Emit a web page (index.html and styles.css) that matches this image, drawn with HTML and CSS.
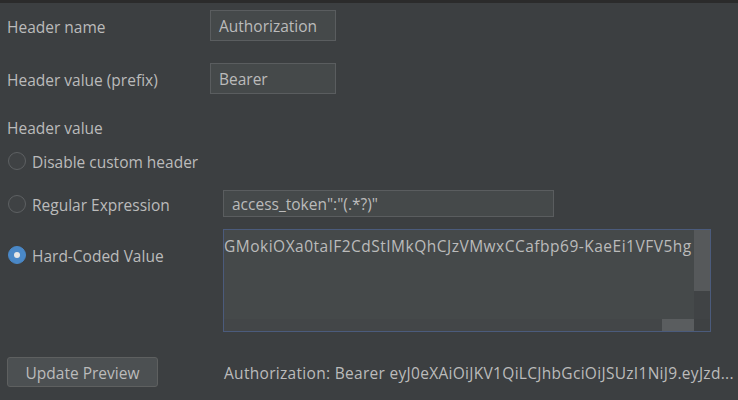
FILE: index.html
```html
<!DOCTYPE html>
<html>
<head>
<meta charset="utf-8">
<link rel="stylesheet" href="styles.css">
</head>
<body>
<div class="topbar"></div>
<div class="form">
  <div class="row row-name">
    <span class="label">Header name</span>
    <div class="field field-short">Authorization</div>
  </div>
  <div class="row row-prefix">
    <span class="label">Header value (prefix)</span>
    <div class="field field-short">Bearer</div>
  </div>
  <div class="section-label">Header value</div>
  <div class="radio-row row-disable">
    <span class="radio"></span>
    <span class="label">Disable custom header</span>
  </div>
  <div class="radio-row row-regex">
    <div class="radio-label">
      <span class="radio"></span>
      <span class="label">Regular Expression</span>
    </div>
    <div class="field field-long">access_token":"(.*?)"</div>
  </div>
  <div class="radio-row row-hard">
    <div class="radio-label hard-label">
      <span class="radio checked"></span>
      <span class="label">Hard-Coded Value</span>
    </div>
    <div class="textarea">
      <div class="ta-content">
        <div class="ta-text">GMokiOXa0talF2CdStIMkQhCJzVMwxCCafbp69-KaeEi1VFV5hg</div>
        <div class="hscroll"><div class="hthumb"></div></div>
      </div>
      <div class="vscroll"><div class="vthumb"></div><div class="corner"></div></div>
    </div>
  </div>
  <div class="bottom-row">
    <button class="btn">Update Preview</button>
    <span class="preview">Authorization: Bearer eyJ0eXAiOiJKV1QiLCJhbGciOiJSUzI1NiJ9.eyJzd...</span>
  </div>
</div>
</body>
</html>
```
FILE: styles.css
```css
html, body {
  margin: 0;
  padding: 0;
  background: #3c3f41;
  width: 738px;
  height: 400px;
  overflow: hidden;
}
body {
  font-family: "Open Sans", "Noto Sans", sans-serif;
  font-size: 15.5px;
  color: #bbbbbb;
}
.topbar {
  height: 3px;
  background: #2b2b2b;
}
.form {
  padding-left: 7px;
  display: flex;
  flex-direction: column;
}
.row {
  display: flex;
  align-items: center;
}
.row .label {
  width: 203px;
  padding-top: 3px;
}
.row-name { margin-top: 7px; }
.row-prefix { margin-top: 22px; }
.field {
  box-sizing: border-box;
  background: #45494a;
  border: 1px solid #5a5d5f;
  display: flex;
  align-items: center;
  padding-left: 8px;
  padding-top: 1px;
  white-space: nowrap;
}
.field-short {
  width: 126px;
  height: 31px;
}
.section-label {
  margin-top: 24px;
  height: 20px;
  line-height: 20px;
}
.radio-row {
  display: flex;
  align-items: center;
}
.row-disable {
  margin-top: 13px;
  height: 20px;
}
.radio-label {
  display: flex;
  align-items: center;
  width: 216px;
}
.radio-label .label,
.row-disable .label {
  padding-top: 2px;
}
.radio {
  box-sizing: border-box;
  width: 18px;
  height: 18px;
  border-radius: 50%;
  border: 1px solid #5e6163;
  background: #3f4244;
  margin-left: 1px;
  margin-right: 6px;
  flex: none;
  position: relative;
}
.radio.checked {
  background: #4a88c7;
  border-color: #4a88c7;
}
.radio.checked::after {
  content: "";
  position: absolute;
  left: 5px;
  top: 5px;
  width: 6px;
  height: 6px;
  border-radius: 50%;
  background: #e6e6e6;
}
.row-regex {
  margin-top: 19px;
}
.field-long {
  width: 331px;
  height: 27px;
}
.row-hard {
  margin-top: 12px;
  align-items: flex-start;
}
.hard-label {
  margin-top: 14px;
}
.textarea {
  box-sizing: border-box;
  width: 488px;
  height: 103px;
  border: 1px solid #4b5b7c;
  background: #45494a;
  display: flex;
}
.ta-content {
  flex: 1;
  display: flex;
  flex-direction: column;
  overflow: hidden;
}
.ta-text {
  flex: 1;
  white-space: nowrap;
  padding-top: 6px;
  line-height: 20px;
  letter-spacing: 0.5px;
}
.hscroll {
  height: 12px;
  background: #434648;
  display: flex;
  justify-content: flex-end;
}
.hthumb {
  width: 32px;
  background: #5a5d5f;
}
.vscroll {
  width: 16px;
  display: flex;
  flex-direction: column;
  background: #404345;
}
.vthumb {
  height: 61px;
  background: #56595b;
}
.corner {
  margin-top: auto;
  height: 12px;
  background: #3e4143;
}
.bottom-row {
  margin-top: 25px;
  display: flex;
  align-items: center;
}
.btn {
  box-sizing: border-box;
  width: 151px;
  height: 30px;
  background: #4c5052;
  border: 1px solid #5e6060;
  border-radius: 3px;
  color: #bbbbbb;
  font-family: inherit;
  font-size: inherit;
  padding: 2px 0 0;
  margin-right: 66px;
}
.preview {
  white-space: nowrap;
  letter-spacing: 0.3px;
  padding-top: 2px;
}
```
